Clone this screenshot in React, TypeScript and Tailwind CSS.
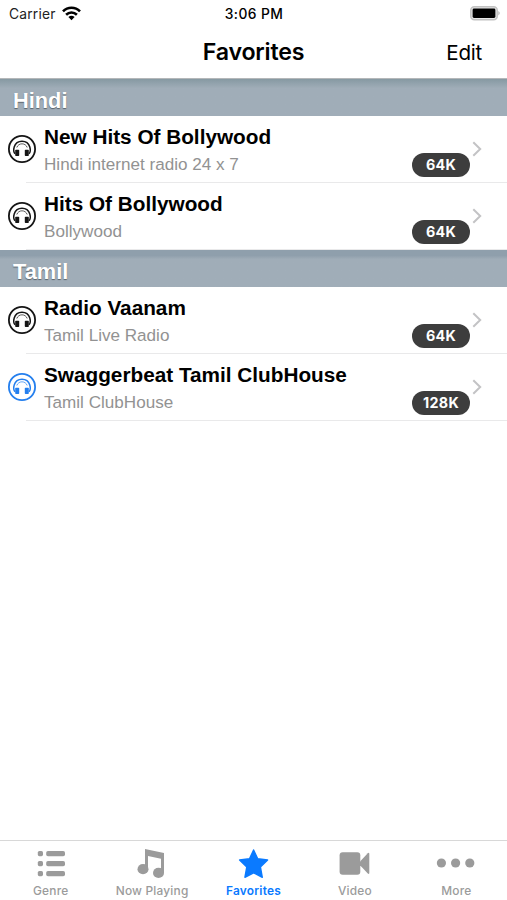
import type { ReactNode } from "react";

type Station = {
  name: string;
  desc: string;
  rate: string;
  playing?: boolean;
};

const sections: { title: string; headerClass: string; stations: Station[] }[] = [
  {
    title: "Hindi",
    headerClass: "from-[#8699a2] to-[#a0adb8] to-25%",
    stations: [
      { name: "New Hits Of Bollywood", desc: "Hindi internet radio 24 x 7", rate: "64K" },
      { name: "Hits Of Bollywood", desc: "Bollywood", rate: "64K" },
    ],
  },
  {
    title: "Tamil",
    headerClass: "from-[#8f9fac] from-15% to-[#a0adb8] to-25%",
    stations: [
      { name: "Radio Vaanam", desc: "Tamil Live Radio", rate: "64K" },
      { name: "Swaggerbeat Tamil ClubHouse", desc: "Tamil ClubHouse", rate: "128K", playing: true },
    ],
  },
];

const tabs: { label: string; icon: ReactNode; active?: boolean }[] = [
  {
    label: "Genre",
    icon: (
      <>
        <rect x="6.8" y="3" width="5.2" height="5.2" rx="1.6" />
        <rect x="15.2" y="3" width="18.8" height="5.2" rx="1.8" />
        <rect x="6.8" y="13" width="5.2" height="5.2" rx="1.6" />
        <rect x="15.2" y="13" width="18.8" height="5.2" rx="1.8" />
        <rect x="6.8" y="23" width="5.2" height="5.2" rx="1.6" />
        <rect x="15.2" y="23" width="18.8" height="5.2" rx="1.8" />
      </>
    ),
  },
  {
    label: "Now Playing",
    icon: (
      <>
        <path d="M13 1 L32 5 V25 H29 V10.8 L16 8 V21 H13 Z" />
        <ellipse cx="11" cy="21.2" rx="5.5" ry="5.1" />
        <ellipse cx="26.5" cy="24.9" rx="5.5" ry="5.1" />
      </>
    ),
  },
  {
    label: "Favorites",
    active: true,
    icon: (
      <path
        d="M19.6 2 L23.7 10.8 L33.6 12 L26.4 19 L28.3 29.3 L19.6 24.8 L10.9 29.3 L12.8 19 L5.6 12 L15.5 10.8 Z"
        stroke="currentColor"
        strokeWidth="1.4"
        strokeLinejoin="round"
      />
    ),
  },
  {
    label: "Video",
    icon: (
      <>
        <rect x="4.6" y="4.2" width="20.7" height="22.5" rx="3" />
        <path d="M25 13.6 L32.8 5.2 Q34.3 4.2 34.3 6 V24.8 Q34.3 26.8 32.8 25.6 L25 17.2 Z" />
      </>
    ),
  },
  {
    label: "More",
    icon: (
      <>
        <circle cx="5.4" cy="15" r="4.6" />
        <circle cx="19.6" cy="15" r="4.6" />
        <circle cx="33.8" cy="15" r="4.6" />
      </>
    ),
  },
];

function StatusBar() {
  return (
    <div className="grid h-[27px] grid-cols-3 items-center pt-px font-['Inter',sans-serif] text-[13.8px] text-[#222]">
      <div className="flex items-center gap-[6px] pl-[9px]">
        <span className="tracking-[0.2px]">Carrier</span>
        <svg width="19" height="15" viewBox="0 0 19 15" className="-mt-px text-black" fill="none" stroke="currentColor" strokeWidth="2.6">
          <path d="M1 5.4 C5.8 0.5 13.2 0.5 18 5.4" />
          <path d="M4.1 8.7 C7.2 5.7 11.8 5.7 14.9 8.7" />
          <path d="M6.4 11 Q9.5 8.4 12.6 11 L9.5 14.2 Z" fill="currentColor" stroke="none" />
        </svg>
      </div>
      <span className="pl-px text-center font-medium tracking-[0.4px] text-black">3:06 PM</span>
      <svg width="31" height="15" viewBox="0 0 31 15" className="-mt-px mr-[6px] justify-self-end">
        <rect x="0.8" y="0.8" width="26.4" height="12.9" rx="3.5" fill="#e9e9e9" stroke="#c2c2c2" strokeWidth="1.5" />
        <rect x="2.6" y="2.6" width="22.8" height="9.3" rx="1.4" fill="#000" />
        <path d="M28.4 5 Q31 7.2 28.4 9.5 Z" fill="#b0b0b0" />
      </svg>
    </div>
  );
}

function NavBar() {
  return (
    <div className="grid h-[52px] grid-cols-3 items-center border-b border-[#b4b7b9] pb-px font-['Inter',sans-serif] text-black">
      <span />
      <h1 className="text-center text-[23.2px] font-semibold tracking-[-0.2px]">Favorites</h1>
      <button className="justify-self-end pr-[25px] pt-[2px] text-[20.6px] tracking-[-0.25px]">Edit</button>
    </div>
  );
}

function Headphones() {
  return (
    <svg width="30" height="30" viewBox="0 0 30 30" fill="none" stroke="currentColor">
      <circle cx="15" cy="15" r="13.1" strokeWidth="1.8" />
      <path d="M8 19.8 C6.4 18 6.6 15 7.2 13 C9.6 5.2 20.4 5.2 22.8 13 C23.4 15 23.6 18 22 19.8" strokeWidth="1.5" />
      <path d="M9.8 13.5 C11.4 8.6 18.6 8.6 20.2 13.5" strokeWidth="0.7" />
      <rect x="8.2" y="15.8" width="4" height="6.2" rx="0.7" fill="currentColor" stroke="none" />
      <rect x="17.8" y="15.8" width="4" height="6.2" rx="0.7" fill="currentColor" stroke="none" />
    </svg>
  );
}

function StationRow({ station }: { station: Station }) {
  return (
    <li className="h-[67px]">
      <div className="flex h-[66px] pl-[7px] pr-[24px]">
        <div className={`mt-[18px] w-[37px] shrink-0 ${station.playing ? "text-[#247fee]" : "text-[#151515]"}`}>
          <Headphones />
        </div>
        <div className="flex-1 whitespace-nowrap">
          <h3 className="pt-[7px] text-[20.75px] font-bold leading-[27px] text-black">{station.name}</h3>
          <p className="pt-[2px] text-[17.1px] leading-[26px] text-[#929292]">{station.desc}</p>
        </div>
        <span className="mr-px mt-[37px] flex h-[24px] w-[58px] items-center justify-center rounded-full bg-[#3d3d3d] font-['Inter',sans-serif] text-[14.3px] font-bold tracking-[0.3px] text-white">
          {station.rate}
        </span>
        <svg width="12" height="18" viewBox="0 0 12 18" className="mt-[24px] shrink-0" fill="none" stroke="#c3c3c5" strokeWidth="2">
          <path d="M2.3 2.3 L9.2 9 L2.3 15.7" />
        </svg>
      </div>
      <div className="ml-[26px] h-px bg-[#e9e9ea]" />
    </li>
  );
}

function TabBar() {
  return (
    <nav className="flex h-[60px] border-t border-[#d8d8d8] font-['Inter',sans-serif]">
      {tabs.map((tab) => (
        <button
          key={tab.label}
          className={`flex flex-1 flex-col items-center pt-[7px] ${tab.active ? "text-[#0a7aff]" : "text-[#9b9b9b]"}`}
        >
          <svg width="40" height="31" viewBox="0 0 40 31" fill="currentColor">
            {tab.icon}
          </svg>
          <span className={`mt-[4px] whitespace-nowrap text-[11.9px] leading-[16px] ${tab.active ? "font-semibold tracking-[0.25px]" : "font-medium tracking-[0.2px]"}`}>
            {tab.label}
          </span>
        </button>
      ))}
    </nav>
  );
}

export default function App() {
  return (
    <div className="flex h-screen w-full flex-col overflow-hidden bg-white font-['Liberation_Sans',sans-serif]">
      <StatusBar />
      <NavBar />
      <main className="flex-1">
        {sections.map((section) => (
          <section key={section.title}>
            <h2
              className={`flex h-[37px] items-center bg-linear-to-b pl-[13px] pt-[8px] text-[21.8px] font-bold text-white [text-shadow:0_1px_1px_#59636b] ${section.headerClass}`}
            >
              {section.title}
            </h2>
            <ul>
              {section.stations.map((station) => (
                <StationRow key={station.name} station={station} />
              ))}
            </ul>
          </section>
        ))}
      </main>
      <TabBar />
    </div>
  );
}
